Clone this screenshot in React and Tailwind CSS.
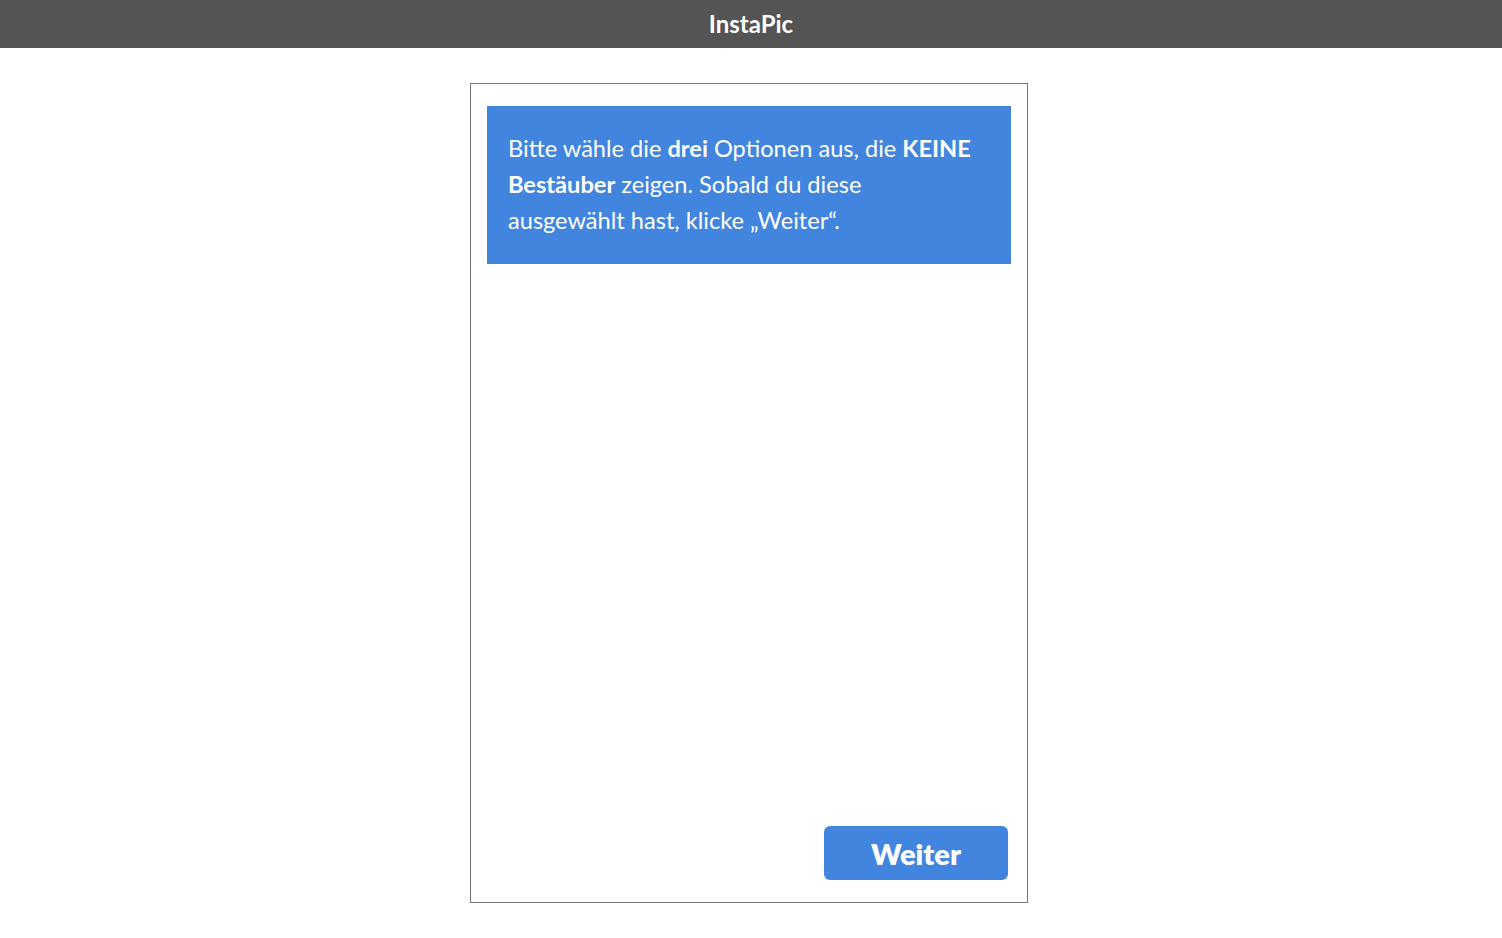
export default function App() {
  const font = { fontFamily: '"Source Sans Pro", Lato, "Noto Sans", sans-serif' };
  return (
    <div className="min-h-[938px] bg-white" style={font}>
      <header className="h-[48px] bg-[#545454] flex items-center justify-center">
        <span className="text-white font-bold text-[24px] leading-none">InstaPic</span>
      </header>
      <main className="flex justify-center pt-[35px] pr-[4px]">
        <div className="w-[558px] h-[820px] border border-[#777777] flex flex-col justify-between pt-[22px] pl-[16px] pr-[16px] pb-[22px]">
          <div className="bg-[#4285de] text-white text-[23.6px] leading-[36px] pl-[21px] pr-[34px] pt-[24px] pb-[26px]">
            Bitte wähle die <b>drei</b> Optionen aus, die <b>KEINE Bestäuber</b> zeigen. Sobald du diese ausgewählt hast, klicke „Weiter“.
          </div>
          <div className="flex justify-end pr-[3px]">
            <button className="w-[184px] h-[54px] rounded-[6px] bg-[#4285de] text-white font-extrabold text-[29px] leading-none">
              Weiter
            </button>
          </div>
        </div>
      </main>
    </div>
  );
}
